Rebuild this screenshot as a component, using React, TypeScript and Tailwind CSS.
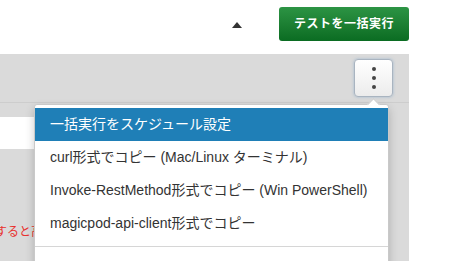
import React from 'react';

const font = { fontFamily: '"Liberation Sans", "Noto Sans CJK JP", sans-serif' };

export default function App() {
  const items = [
    'curl形式でコピー (Mac/Linux ターミナル)',
    'Invoke-RestMethod形式でコピー (Win PowerShell)',
    'magicpod-api-client形式でコピー',
  ];

  return (
    <div className="w-[473px] h-[261px] overflow-hidden bg-white" style={font}>
      {/* top bar */}
      <div className="h-[54px] flex items-start">
        <div className="ml-[232px] mt-[22px] w-0 h-0 border-l-[5px] border-r-[5px] border-b-[6px] border-l-transparent border-r-transparent border-b-[#333]" />
        <button className="ml-[37px] mt-[7px] w-[130px] h-[34px] rounded-[3px] bg-gradient-to-b from-[#2c9444] to-[#0a6c22] text-white text-[12px] font-bold tracking-[0.5px] flex items-center justify-center">
          テストを一括実行
        </button>
      </div>

      {/* gray panel */}
      <div className="w-[409px] h-[207px] bg-[#dadada] relative">
        <div className="h-[49px] flex justify-end items-start pt-[5px] pr-[16px] border-b border-[#cdcdcd]">
          <button className="w-[39px] h-[38px] rounded-[4px] border border-[#a9b4c0] bg-gradient-to-b from-white to-[#ececec] shadow-[0_0_3px_rgba(120,160,200,0.6)] flex flex-col items-center justify-center gap-[5px]">
            <span className="w-[4px] h-[4px] rounded-full bg-[#444]" />
            <span className="w-[4px] h-[4px] rounded-full bg-[#444]" />
            <span className="w-[4px] h-[4px] rounded-full bg-[#444]" />
          </button>
        </div>
        <div className="mt-[14px] w-[300px] h-[32px] bg-white" />
        <div className="mt-[77px] w-[34px] overflow-hidden whitespace-nowrap">
          <div className="-ml-[5px] text-[12px] text-[#e8322f] leading-none">すると高</div>
        </div>

        {/* dropdown menu */}
        <div className="absolute left-[34px] top-[50px] w-[355px] h-[170px] bg-white border border-[#c9c9c9] rounded-t-[3px] shadow-[0_4px_10px_rgba(0,0,0,0.2)] pt-[3px] text-[14px] text-[#333]">
          <div className="absolute -top-[5px] left-[334px] w-[9px] h-[9px] rotate-45 bg-white border-l border-t border-[#c9c9c9]" />
          <div className="relative h-[33px] flex items-center pl-[15px] bg-[#1f7fb7] text-white">
            一括実行をスケジュール設定
          </div>
          {items.map((t) => (
            <div key={t} className="h-[33px] flex items-center pl-[15px]">
              {t}
            </div>
          ))}
          <div className="mt-[6px] h-px bg-[#d6d6d6]" />
        </div>
      </div>
    </div>
  );
}
